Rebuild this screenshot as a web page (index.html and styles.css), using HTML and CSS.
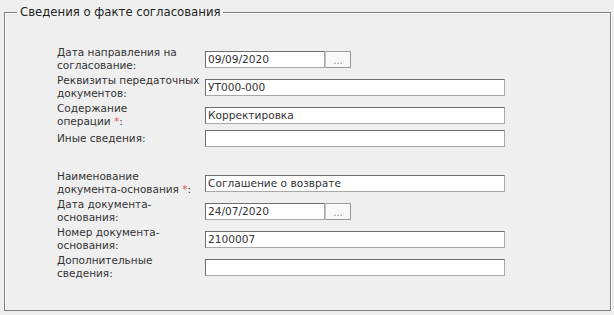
FILE: index.html
```html
<!DOCTYPE html>
<html lang="ru">
<head>
<meta charset="utf-8">
<title>Сведения о факте согласования</title>
<link rel="stylesheet" href="styles.css">
</head>
<body>
<fieldset class="group">
  <legend class="group-title">Сведения о факте согласования</legend>
  <div class="form">
    <div class="row">
      <label class="lbl">Дата направления на<br>согласование:</label>
      <div class="ctl"><input class="inp inp-date" type="text" value="09/09/2020"><button class="pick" type="button">...</button></div>
    </div>
    <div class="row">
      <label class="lbl">Реквизиты передаточных<br>документов:</label>
      <div class="ctl"><input class="inp" type="text" value="УТ000-000"></div>
    </div>
    <div class="row">
      <label class="lbl">Содержание<br>операции <span class="req">*</span>:</label>
      <div class="ctl"><input class="inp" type="text" value="Корректировка"></div>
    </div>
    <div class="row row-single">
      <label class="lbl">Иные сведения:</label>
      <div class="ctl"><input class="inp" type="text" value=""></div>
    </div>
    <div class="row row-sep">
      <label class="lbl">Наименование<br>документа-основания <span class="req">*</span>:</label>
      <div class="ctl"><input class="inp" type="text" value="Соглашение о возврате"></div>
    </div>
    <div class="row">
      <label class="lbl">Дата документа-<br>основания:</label>
      <div class="ctl"><input class="inp inp-date" type="text" value="24/07/2020"><button class="pick" type="button">...</button></div>
    </div>
    <div class="row">
      <label class="lbl">Номер документа-<br>основания:</label>
      <div class="ctl"><input class="inp" type="text" value="2100007"></div>
    </div>
    <div class="row">
      <label class="lbl">Дополнительные<br>сведения:</label>
      <div class="ctl"><input class="inp" type="text" value=""></div>
    </div>
  </div>
</fieldset>
</body>
</html>
```

FILE: styles.css
```css
html, body {
  margin: 0;
  padding: 0;
  background: #efefef;
}
body {
  font-family: "DejaVu Sans", Verdana, sans-serif;
  font-size: 10.5px;
  color: #333;
}
.group {
  margin: 5px 3px 0 4px;
  padding: 26px 12px 30px 12px;
  border: 1px solid #808080;
  box-shadow: 1px 1px 0 #fff, inset 1px 1px 0 #fff;
  min-width: 0;
}
.group-title {
  padding: 0 2px 0 3px;
  font-size: 11.7px;
  line-height: 15px;
  color: #222;
}
.form {
  margin-left: 40px;
  display: flex;
  flex-direction: column;
  gap: 2px;
}
.row {
  display: grid;
  grid-template-columns: 140px 300px;
  column-gap: 8px;
  align-items: center;
  min-height: 26px;
}
.row-single {
  min-height: 17px;
}
.row-sep {
  margin-top: 21px;
}
.lbl {
  line-height: 13px;
  white-space: nowrap;
  color: #333;
}
.req {
  color: #e05a5a;
}
.ctl {
  display: flex;
  height: 17px;
}
.inp {
  box-sizing: border-box;
  width: 300px;
  height: 17px;
  margin: 0;
  padding: 0 2px;
  font-family: "DejaVu Sans", Verdana, sans-serif;
  font-size: 10.6px;
  color: #333;
  background: #fff;
  border: 1px solid #a8a8a8;
  border-top-color: #6e6e6e;
  border-left-color: #6e6e6e;
  border-radius: 0;
  outline: none;
}
.inp-date {
  width: 120px;
}
.pick {
  box-sizing: border-box;
  width: 26px;
  height: 17px;
  margin: 0;
  padding: 2px 0 0;
  font-family: "DejaVu Sans", Verdana, sans-serif;
  font-size: 10px;
  line-height: 13px;
  color: #888;
  background: #f8f8f8;
  border: 1px solid #9a9a9a;
  border-left-color: #bdbdbd;
  border-radius: 0;
  box-shadow: inset 1px 1px 0 #fff;
}
```
